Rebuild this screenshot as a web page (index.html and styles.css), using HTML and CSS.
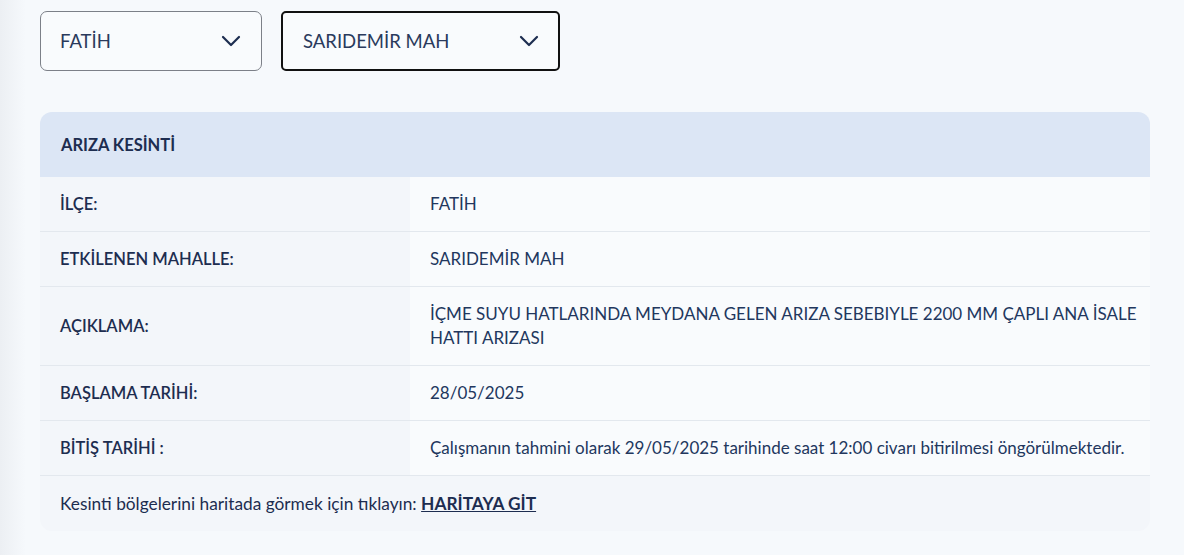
FILE: index.html
```html
<!DOCTYPE html>
<html lang="tr">
<head>
    <meta charset="UTF-8">
    <title>Arıza Kesinti</title>
    <link rel="stylesheet" href="styles.css">
</head>
<body>
    <div class="page">
        <div class="filters">
            <div class="select select-ilce">
                <span>FATİH</span>
                <svg class="chev" width="20" height="12" viewBox="0 0 20 12"><path d="M2 2 L10 10 L18 2" fill="none" stroke="#1d2d50" stroke-width="2.2" stroke-linecap="round" stroke-linejoin="round"/></svg>
            </div>
            <div class="select select-mah active">
                <span>SARIDEMİR MAH</span>
                <svg class="chev" width="20" height="12" viewBox="0 0 20 12"><path d="M2 2 L10 10 L18 2" fill="none" stroke="#1d2d50" stroke-width="2.2" stroke-linecap="round" stroke-linejoin="round"/></svg>
            </div>
        </div>

        <div class="card">
            <div class="card-head">ARIZA KESİNTİ</div>
            <div class="row">
                <div class="label">İLÇE:</div>
                <div class="value">FATİH</div>
            </div>
            <div class="row">
                <div class="label">ETKİLENEN MAHALLE:</div>
                <div class="value">SARIDEMİR MAH</div>
            </div>
            <div class="row row-tall">
                <div class="label">AÇIKLAMA:</div>
                <div class="value">İÇME SUYU HATLARINDA MEYDANA GELEN ARIZA SEBEBIYLE 2200 MM ÇAPLI ANA İSALE HATTI ARIZASI</div>
            </div>
            <div class="row">
                <div class="label">BAŞLAMA TARİHİ:</div>
                <div class="value">28/05/2025</div>
            </div>
            <div class="row">
                <div class="label">BİTİŞ TARİHİ :</div>
                <div class="value">Çalışmanın tahmini olarak 29/05/2025 tarihinde saat 12:00 civarı bitirilmesi öngörülmektedir.</div>
            </div>
            <div class="card-foot">Kesinti bölgelerini haritada görmek için tıklayın: <a href="#">HARİTAYA GİT</a></div>
        </div>
    </div>
</body>
</html>
```

FILE: styles.css
```css
:root {
    --ink: #1d2d50;
    --bg: #f6f9fc;
}

body {
    margin: 0;
    background: linear-gradient(to right, #eceff3 0px, var(--bg) 26px);
    font-family: Lato, "Open Sans", sans-serif;
    color: var(--ink);
    height: 555px;
    overflow: hidden;
}
.page {
    padding: 11px 34px 0 40px;
}
.filters {
    display: flex;
    gap: 19px;
}
.select {
    height: 60px;
    box-sizing: border-box;
    display: flex;
    align-items: center;
    justify-content: space-between;
    padding: 0 20px 0 19px;
    border: 1px solid #7c8088;
    border-radius: 7px;
    background: #f9fbfd;
    font-size: 18.5px;
    color: #2a3a5c;
}
.select-ilce {
    width: 222px;
}
.select-mah {
    width: 279px;
    padding-left: 20px;
    padding-right: 19px;
}
.select.active {
    border: 2px solid #111;
    border-radius: 5px;
}
.card {
    margin-top: 41px;
    border-radius: 12px;
    overflow: hidden;
    background: #f3f6fa;
    font-size: 17px;
}
.card-head {
    height: 65px;
    display: flex;
    align-items: center;
    padding-left: 21px;
    background: #dce6f5;
    font-weight: 700;
    font-size: 16.5px;
}
.row {
    display: grid;
    grid-template-columns: 370px 1fr;
    min-height: 54px;
    border-bottom: 1px solid #e3e8ee;
}
.row-tall {
    min-height: 78px;
}
.label {
    display: flex;
    align-items: center;
    padding-left: 20px;
    font-weight: 600;
    font-size: 16.5px;
}
.value {
    display: flex;
    align-items: center;
    padding: 0 6px 0 20px;
    background: #f9fbfd;
    line-height: 24px;
    color: #22375e;
}
.card-foot {
    height: 55px;
    display: flex;
    align-items: center;
    padding-left: 20px;
    white-space: pre;
    font-size: 17.3px;
}
.card-foot a {
    color: var(--ink);
    font-weight: 700;
}
```
